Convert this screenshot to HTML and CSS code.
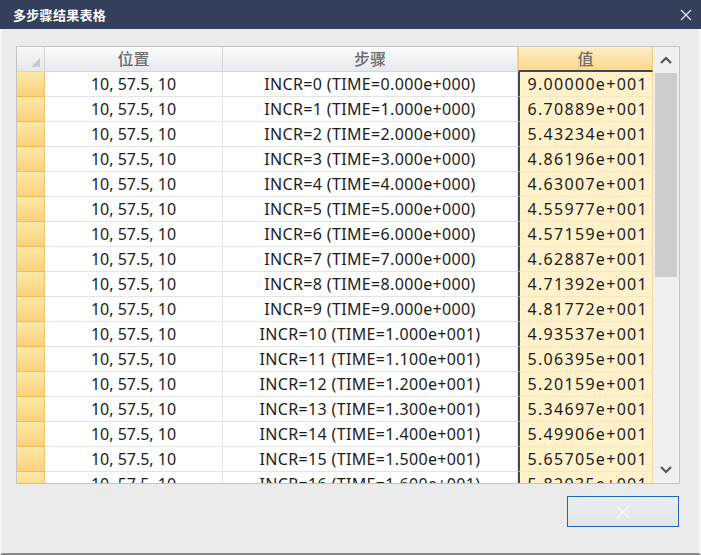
FILE: index.html
```html
<!DOCTYPE html>
<html>
<head>
<meta charset="utf-8">
<link rel="stylesheet" href="styles.css">
</head>
<body>
<div class="window">
  <div class="titlebar">
    <span class="title">多步骤结果表格</span>
    <svg class="close" width="12" height="12" viewBox="0 0 12 12"><path d="M1 1 L11 11 M11 1 L1 11" stroke="#e8e8ee" stroke-width="1.2" fill="none"/></svg>
  </div>
  <div class="content">
    <div class="gridbox">
      <div class="table">
        <div class="row head">
          <div class="rh corner"><span class="tri"></span></div>
          <div class="hc">位置</div>
          <div class="hc">步骤</div>
          <div class="hc hsel">值</div>
        </div>
        <div id="rows"></div>
      </div>
      <div class="scrollbar">
        <div class="arrow up"><svg width="14" height="10" viewBox="0 0 14 10"><path d="M2 8 L7 3 L12 8" fill="none" stroke="#555" stroke-width="2.2"/></svg></div>
        <div class="track"><div class="thumb"></div></div>
        <div class="arrow down"><svg width="14" height="10" viewBox="0 0 14 10"><path d="M2 2 L7 7 L12 2" fill="none" stroke="#555" stroke-width="2.2"/></svg></div>
      </div>
    </div>
    <div class="footer">
      <button class="btn"><svg width="14" height="14" viewBox="0 0 14 14"><path d="M1 1 L13 13 M13 1 L1 13" stroke="#fbfbfb" stroke-width="1.3" fill="none"/></svg></button>
    </div>
  </div>
</div>
<script>
var vals=["9.00000e+001","6.70889e+001","5.43234e+001","4.86196e+001","4.63007e+001","4.55977e+001","4.57159e+001","4.62887e+001","4.71392e+001","4.81772e+001","4.93537e+001","5.06395e+001","5.20159e+001","5.34697e+001","5.49906e+001","5.65705e+001","5.82035e+001"];
var html="";
for(var i=0;i<vals.length;i++){
  var t = i<10 ? (i+".000e+000") : ((i/10).toFixed(3)+"e+001");
  html+='<div class="row"><div class="rh"></div><div class="c">10, 57.5, 10</div><div class="c s">INCR='+i+' (TIME='+t+')</div><div class="c v">'+vals[i]+'</div></div>';
}
document.getElementById("rows").innerHTML=html;
</script>
</body>
</html>
```
FILE: styles.css
```css
* { box-sizing: border-box; }
html, body { margin: 0; padding: 0; }
body { width: 701px; height: 555px; overflow: hidden; background: #ebebeb; font-family: "Noto Sans", "Noto Sans CJK SC", sans-serif; }
.window { width: 701px; height: 555px; display: flex; flex-direction: column; background: #ebebeb; border-left: 2px solid #f6f6f6; border-right: 2px solid #f6f6f6; border-bottom: 2px solid #8a8a8a; }
.titlebar { height: 29px; margin: 0 -2px; background: #343f5c; display: flex; align-items: center; justify-content: space-between; padding: 0 9px 0 13px; color: #fff; }
.title { font-family: "Noto Sans CJK SC", sans-serif; font-weight: 700; font-size: 13px; letter-spacing: 0.3px; }
.close { display: block; }
.content { flex: 1; padding: 17px 19px 0 14px; display: flex; flex-direction: column; }
.gridbox { width: 664px; height: 438px; border: 1px solid #c4c4c4; display: flex; overflow: hidden; background: #fff; }
.table { width: 636px; height: 100%; overflow: hidden; }
.row { display: grid; grid-template-columns: 28px 178px 295px 135px; height: 25px; }
.row.head { height: 25px; }
.rh { background: linear-gradient(#fde9a7, #fbd17a); border-bottom: 1px solid #f6b95a; border-right: 1px solid #f2c070; }
.corner { background: linear-gradient(#f7f8fa, #e6e8ec); border-bottom: 1px solid #d2d4d8; border-right: 1px solid #d2d4d8; position: relative; }
.tri { position: absolute; right: 4px; bottom: 4px; width: 0; height: 0; border-left: 9px solid transparent; border-bottom: 9px solid #c7c9cc; }
.hc { background: linear-gradient(#fbfcfd, #e7e9ee); border-right: 1px solid #d5d7db; border-bottom: 1px solid #d2d4d8; text-align: center; font-family: "Noto Sans CJK SC", sans-serif; font-size: 16px; font-weight: 500; color: #6e6e6e; line-height: 23px; }
.hc.hsel { background: linear-gradient(#fdf0c6, #fbd88a); border-right: 1px solid #f3c880; border-bottom: 2px solid #3c4660; border-left: 1px solid #f3c880; color: #6e6e6e; }
.c { border-bottom: 1px solid #e4e4e4; border-right: 1px solid #e4e4e4; text-align: center; font-size: 16px; letter-spacing: 0; color: #1b1b1b; line-height: 25px; white-space: nowrap; overflow: hidden; }
.c.s { letter-spacing: 0.35px; }
.c.v { background: #fff2cb; text-align: right; padding-right: 4px; letter-spacing: 1.3px; border-left: 2px solid #3c4660; border-right: 1px solid #f1d9a0; border-bottom: 1px solid #f4e6c0; }
.scrollbar { width: 26px; height: 100%; background: #f0f0f0; display: flex; flex-direction: column; }
.arrow { height: 26px; display: flex; align-items: center; justify-content: center; }
.track { flex: 1; padding: 0 2px; }
.thumb { height: 204px; background: #cdcdcd; }
.footer { display: flex; justify-content: flex-end; padding-top: 12px; }
.btn { width: 112px; height: 31px; border: 1px solid #1c67b3; background: linear-gradient(#e9ecf0, #e2e5e9); padding: 0; margin-right: 1px; display: flex; align-items: center; justify-content: center; }
```
